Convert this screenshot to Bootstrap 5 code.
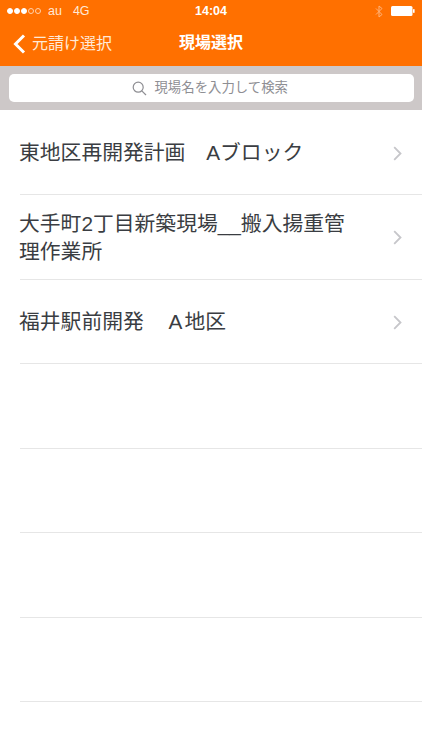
<!DOCTYPE html>
<html lang="ja"><head><meta charset="utf-8">
<link href="https://cdn.jsdelivr.net/npm/bootstrap@5.3.0/dist/css/bootstrap.min.css" rel="stylesheet">
<style>
html,body{height:750px;overflow:hidden;background:#fff}
body{font-family:"Liberation Sans","Noto Sans CJK JP",sans-serif;color:#3a3d42}
.app-head{background:#ff7000;color:#fff;height:66px}
.stat-bar{height:22px;padding:0 7px 0 7px;font-size:12.5px;line-height:22px}
.stat-left{width:150px;gap:7px}
.stat-left .carrier{color:#ffe9d8}
.sig{gap:1px}
.sig i{display:block;width:6px;height:6px;border-radius:50%;border:.7px solid #ffd2ad}
.sig i.on{background:#fff;border-color:#fff}
.stat-time{font-weight:700;font-size:12.5px;top:0;left:0;right:0;text-align:center}
.nav-zone{height:44px;font-size:16px}
.back-link{left:12px;top:0;height:44px;gap:5px;font-size:16px;color:#ffe9d8}
.nav-title{font-weight:700;font-size:16px;padding-bottom:3px}
.search-zone{background:#cdc8c8;height:44px;padding:8px 8px 8px 8.5px}
.search-box{height:28px;border-radius:5px;background:#fff;color:#8e8e93;font-size:13.4px;gap:7px;padding-right:2px}
.row-item{height:84.5px;margin-left:20px;border-bottom:1px solid #e6e6e6;padding-right:20px;font-size:20.8px;line-height:28px;padding-top:1.500px}
.row-text{width:335px;margin-left:-1px}
.a-mark{margin:0 2px 0 4px}
.list-zone{padding-top:.5px}
</style></head><body>
<header class="app-head position-relative">
  <div class="stat-bar position-relative d-flex justify-content-between align-items-center">
    <div class="stat-left d-flex align-items-center"><div class="sig d-flex"><i class="on"></i><i class="on"></i><i class="on"></i><i></i><i></i></div><span class="carrier">au</span><span class="carrier ms-1">4G</span></div>
    <div class="stat-time position-absolute">14:04</div>
    <div class="d-flex align-items-center gap-2">
      <svg width="8" height="13" viewBox="0 0 8 13" fill="none" stroke="#ffb27a" stroke-width="1"><path d="M1 3.500 7 9.500 4 12V1L7 3.500 1 9.500"/></svg>
      <svg width="24" height="10" viewBox="0 0 24 10"><rect width="21.500" height="10" rx="1.500" fill="#fff"/><rect x="22" y="3.200" width="1.600" height="3.600" fill="#fff"/></svg>
    </div>
  </div>
  <div class="nav-zone position-relative d-flex align-items-center justify-content-center">
    <div class="back-link position-absolute d-flex align-items-center">
      <svg width="15" height="22" viewBox="0 0 15 22" fill="none" stroke="#fff" stroke-width="3"><path d="M12 2.500 3.500 11 12 19.500"/></svg>
      <span>元請け選択</span>
    </div>
    <div class="nav-title">現場選択</div>
  </div>
</header>
<div class="search-zone">
  <div class="search-box d-flex align-items-center justify-content-center">
    <svg width="15" height="15" viewBox="0 0 15 15" fill="none" stroke="#8e8e93" stroke-width="1.200"><circle cx="6.200" cy="6.200" r="5"/><path d="M9.800 9.800 14 14"/></svg>
    <span>現場名を入力して検索</span>
  </div>
</div>
<main class="list-zone">
  <div class="row-item d-flex align-items-center justify-content-between"><span class="row-text">東地区再開発計画　Aブロック</span><svg width="9" height="15" viewBox="0 0 9 15" fill="none" stroke="#c6c6ca" stroke-width="1.800"><path d="M1.200 1.200 7.500 7.500 1.200 13.800"/></svg></div>
  <div class="row-item d-flex align-items-center justify-content-between"><span class="row-text">大手町2丁目新築現場__搬入揚重管理作業所</span><svg width="9" height="15" viewBox="0 0 9 15" fill="none" stroke="#c6c6ca" stroke-width="1.800"><path d="M1.200 1.200 7.500 7.500 1.200 13.800"/></svg></div>
  <div class="row-item d-flex align-items-center justify-content-between"><span class="row-text">福井駅前開発　<span class="a-mark">A</span>地区</span><svg width="9" height="15" viewBox="0 0 9 15" fill="none" stroke="#c6c6ca" stroke-width="1.800"><path d="M1.200 1.200 7.500 7.500 1.200 13.800"/></svg></div>
  <div class="row-item"></div>
  <div class="row-item"></div>
  <div class="row-item"></div>
  <div class="row-item"></div>
</main>
</body></html>
